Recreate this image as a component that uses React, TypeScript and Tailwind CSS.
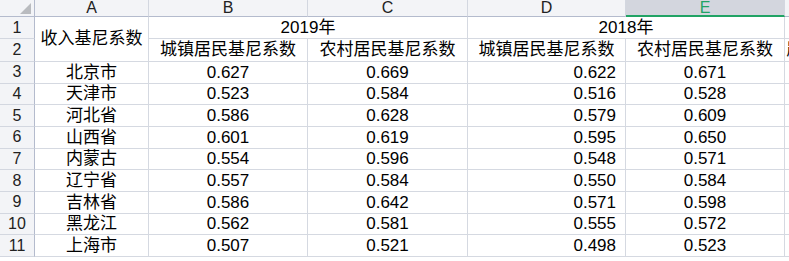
const rows: [string, string, string, string, string][] = [
  ["北京市", "0.627", "0.669", "0.622", "0.671"],
  ["天津市", "0.523", "0.584", "0.516", "0.528"],
  ["河北省", "0.586", "0.628", "0.579", "0.609"],
  ["山西省", "0.601", "0.619", "0.595", "0.650"],
  ["内蒙古", "0.554", "0.596", "0.548", "0.571"],
  ["辽宁省", "0.557", "0.584", "0.550", "0.584"],
  ["吉林省", "0.586", "0.642", "0.571", "0.598"],
  ["黑龙江", "0.562", "0.581", "0.555", "0.572"],
  ["上海市", "0.507", "0.521", "0.498", "0.523"]
];

const cell = "flex items-center justify-center border-r border-b border-[#d5d9e1] bg-white whitespace-nowrap overflow-hidden";
const colHead = "flex items-center justify-center border-r border-b border-r-[#d3d7e0] border-b-[#b4bbcd] bg-[#f3f4f7] text-[16px] leading-none text-[#222]";
const rowHead = "flex items-center justify-center border-r border-b border-r-[#b4bbcd] border-b-[#d3d7e0] bg-[#f3f4f7] text-[16px] leading-none text-[#222]";

export default function App() {
  return (
    <div
      className="h-[261px] w-[789px] overflow-hidden bg-white text-[17px] text-black"
      style={{ fontFamily: '"Liberation Sans", "Noto Sans CJK SC", sans-serif' }}
    >
      <div className="grid grid-cols-[35px_114px_159px_160px_158px_159px_20px] grid-rows-[17px_22px_23px_repeat(9,21.67px)]">
        {/* corner */}
        <div className="flex items-end justify-end border-r border-b border-r-[#b4bbcd] border-b-[#b4bbcd] bg-[#f3f4f7] pr-[3px] pb-[2px]">
          <svg width="11" height="11" viewBox="0 0 11 11">
            <polygon points="11,0 11,11 0,11" fill="#b9bbbf" />
          </svg>
        </div>
        <div className={colHead}>A</div>
        <div className={colHead}>B</div>
        <div className={colHead}>C</div>
        <div className={colHead}>D</div>
        <div className="flex items-center justify-center border-r border-r-[#d3d7e0] border-b-2 border-b-[#21a365] bg-[#d3d6de] text-[16px] leading-none text-[#21a365]">
          E
        </div>
        <div className="border-b border-b-[#b4bbcd] bg-[#f3f4f7]" />

        {/* row 1 */}
        <div className={rowHead}>1</div>
        <div className={`${cell} row-span-2`}>收入基尼系数</div>
        <div className={`${cell} col-span-2`}>2019年</div>
        <div className={`${cell} col-span-2`}>2018年</div>
        <div className={cell} />

        {/* row 2 */}
        <div className={rowHead}>2</div>
        <div className={cell}>城镇居民基尼系数</div>
        <div className={cell}>农村居民基尼系数</div>
        <div className={cell}>城镇居民基尼系数</div>
        <div className={cell}>农村居民基尼系数</div>
        <div className={`${cell} justify-start pl-[1px]`}>農</div>

        {rows.map((r, i) => (
          <div key={r[0]} className="contents">
            <div className={rowHead}>{i + 3}</div>
            <div className={cell}>{r[0]}</div>
            <div className={cell}>{r[1]}</div>
            <div className={cell}>{r[2]}</div>
            <div className={`${cell} justify-end pr-[9px]`}>{r[3]}</div>
            <div className={cell}>{r[4]}</div>
            <div className={cell} />
          </div>
        ))}
      </div>
    </div>
  );
}
